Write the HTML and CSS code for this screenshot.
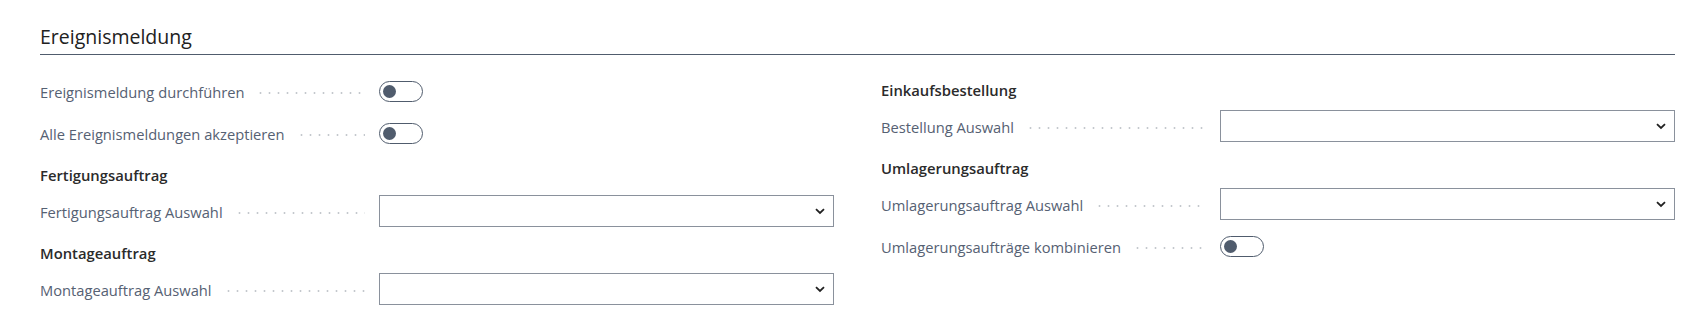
FILE: index.html
```html
<!DOCTYPE html>
<html lang="de">
<head>
<meta charset="utf-8">
<title>Ereignismeldung</title>
<link rel="stylesheet" href="styles.css">
</head>
<body>
<section class="card">
  <h2 class="card-title">Ereignismeldung</h2>
  <div class="columns">
    <div class="column">
      <div class="group group-plain">
        <div class="field">
          <div class="label"><span class="label-text">Ereignismeldung durchführen</span><span class="leader"></span></div>
          <div class="control"><span class="toggle"><span class="knob"></span></span></div>
        </div>
        <div class="field">
          <div class="label"><span class="label-text">Alle Ereignismeldungen akzeptieren</span><span class="leader"></span></div>
          <div class="control"><span class="toggle"><span class="knob"></span></span></div>
        </div>
      </div>
      <div class="group">
        <h3 class="group-title">Fertigungsauftrag</h3>
        <div class="field">
          <div class="label"><span class="label-text">Fertigungsauftrag Auswahl</span><span class="leader"></span></div>
          <div class="control"><div class="select"><svg class="chev" width="10" height="7" viewBox="0 0 10 7"><path d="M1 1.2 L5 5 L9 1.2" fill="none" stroke="#212121" stroke-width="1.8"/></svg></div></div>
        </div>
      </div>
      <div class="group">
        <h3 class="group-title">Montageauftrag</h3>
        <div class="field">
          <div class="label"><span class="label-text">Montageauftrag Auswahl</span><span class="leader"></span></div>
          <div class="control"><div class="select"><svg class="chev" width="10" height="7" viewBox="0 0 10 7"><path d="M1 1.2 L5 5 L9 1.2" fill="none" stroke="#212121" stroke-width="1.8"/></svg></div></div>
        </div>
      </div>
    </div>
    <div class="column">
      <div class="group">
        <h3 class="group-title">Einkaufsbestellung</h3>
        <div class="field">
          <div class="label"><span class="label-text">Bestellung Auswahl</span><span class="leader"></span></div>
          <div class="control"><div class="select"><svg class="chev" width="10" height="7" viewBox="0 0 10 7"><path d="M1 1.2 L5 5 L9 1.2" fill="none" stroke="#212121" stroke-width="1.8"/></svg></div></div>
        </div>
      </div>
      <div class="group">
        <h3 class="group-title">Umlagerungsauftrag</h3>
        <div class="field">
          <div class="label"><span class="label-text">Umlagerungsauftrag Auswahl</span><span class="leader"></span></div>
          <div class="control"><div class="select"><svg class="chev" width="10" height="7" viewBox="0 0 10 7"><path d="M1 1.2 L5 5 L9 1.2" fill="none" stroke="#212121" stroke-width="1.8"/></svg></div></div>
        </div>
        <div class="field">
          <div class="label"><span class="label-text">Umlagerungsaufträge kombinieren</span><span class="leader"></span></div>
          <div class="control"><span class="toggle"><span class="knob"></span></span></div>
        </div>
      </div>
    </div>
  </div>
</section>
</body>
</html>
```
FILE: styles.css
```css
* { box-sizing: border-box; }
html, body { margin: 0; padding: 0; background: #ffffff; }
body {
  font-family: "Open Sans", "Noto Sans", sans-serif;
  color: #212121;
  width: 1686px;
  height: 332px;
  overflow: hidden;
}
.card {
  padding: 23px 11px 0 40px;
}
.card-title {
  margin: 0;
  font-size: 19.5px;
  font-weight: 400;
  line-height: 28px;
  padding-bottom: 3px;
  border-bottom: 1px solid #505c6d;
  color: #212121;
}
.columns {
  display: grid;
  grid-template-columns: 1fr 1fr;
  column-gap: 47px;
  margin-top: 9px;
}
.column { display: flex; flex-direction: column; }
.group { display: flex; flex-direction: column; gap: 10px; }
.group-plain { padding-top: 11px; }
.group-title {
  margin: 16px 0 0 0;
  height: 20px;
  line-height: 20px;
  font-size: 14.8px;
  font-weight: 600;
  color: #2b2b2b;
}
.field {
  display: grid;
  grid-template-columns: 339px 1fr;
  height: 32px;
  align-items: center;
}
.label {
  display: flex;
  align-items: center;
  min-width: 0;
  padding-right: 14px;
  padding-top: 2px;
}
.label-text {
  font-size: 14.7px;
  color: #566173;
  white-space: nowrap;
  line-height: 20px;
}
.leader {
  flex: 1;
  height: 4px;
  margin-left: 12px;
  background-image: radial-gradient(circle, #c4c8cd 0.9px, transparent 1.2px);
  background-size: 9px 4px;
  background-repeat: repeat-x;
  background-position: left center;
  margin-top: 1px;
}
.control { display: flex; align-items: center; height: 32px; }
.toggle {
  width: 44px;
  height: 21px;
  border: 1px solid #505c6d;
  border-radius: 11px;
  display: flex;
  align-items: center;
  padding-left: 3px;
}
.knob {
  width: 13px;
  height: 13px;
  border-radius: 50%;
  background: #505c6d;
}
.select {
  width: 100%;
  height: 32px;
  border: 1px solid #8a919c;
  display: flex;
  align-items: center;
  justify-content: flex-end;
  padding-right: 8px;
}
.chev { display: block; }
```
